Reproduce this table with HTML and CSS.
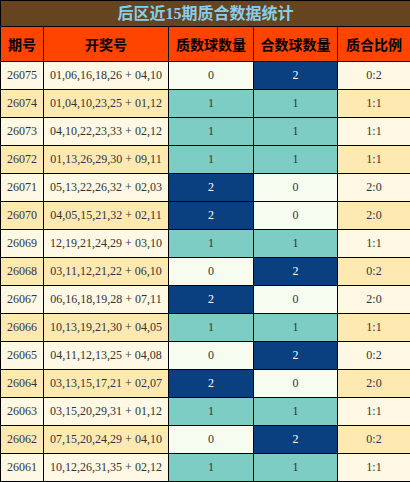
FILE: index.html
```html
<!DOCTYPE html>
<html lang="zh-CN">
<head>
    <meta charset="UTF-8">
    <title>后区近15期质合数据统计</title>
    <link rel="stylesheet" href="styles.css">
</head>
<body>
    <table class="stats">
        <colgroup>
            <col class="c-issue">
            <col class="c-nums">
            <col class="c-prime">
            <col class="c-comp">
            <col class="c-ratio">
        </colgroup>
        <thead>
            <tr class="title-row"><th colspan="5">后区近15期质合数据统计</th></tr>
            <tr class="head-row">
                <th>期号</th>
                <th>开奖号</th>
                <th>质数球数量</th>
                <th>合数球数量</th>
                <th>质合比例</th>
            </tr>
        </thead>
        <tbody>
            <tr><td>26075</td><td>01,06,16,18,26 + 04,10</td><td class="v0">0</td><td class="v2">2</td><td>0:2</td></tr>
            <tr><td>26074</td><td>01,04,10,23,25 + 01,12</td><td class="v1">1</td><td class="v1">1</td><td>1:1</td></tr>
            <tr><td>26073</td><td>04,10,22,23,33 + 02,12</td><td class="v1">1</td><td class="v1">1</td><td>1:1</td></tr>
            <tr><td>26072</td><td>01,13,26,29,30 + 09,11</td><td class="v1">1</td><td class="v1">1</td><td>1:1</td></tr>
            <tr><td>26071</td><td>05,13,22,26,32 + 02,03</td><td class="v2">2</td><td class="v0">0</td><td>2:0</td></tr>
            <tr><td>26070</td><td>04,05,15,21,32 + 02,11</td><td class="v2">2</td><td class="v0">0</td><td>2:0</td></tr>
            <tr><td>26069</td><td>12,19,21,24,29 + 03,10</td><td class="v1">1</td><td class="v1">1</td><td>1:1</td></tr>
            <tr><td>26068</td><td>03,11,12,21,22 + 06,10</td><td class="v0">0</td><td class="v2">2</td><td>0:2</td></tr>
            <tr><td>26067</td><td>06,16,18,19,28 + 07,11</td><td class="v2">2</td><td class="v0">0</td><td>2:0</td></tr>
            <tr><td>26066</td><td>10,13,19,21,30 + 04,05</td><td class="v1">1</td><td class="v1">1</td><td>1:1</td></tr>
            <tr><td>26065</td><td>04,11,12,13,25 + 04,08</td><td class="v0">0</td><td class="v2">2</td><td>0:2</td></tr>
            <tr><td>26064</td><td>03,13,15,17,21 + 02,07</td><td class="v2">2</td><td class="v0">0</td><td>2:0</td></tr>
            <tr><td>26063</td><td>03,15,20,29,31 + 01,12</td><td class="v1">1</td><td class="v1">1</td><td>1:1</td></tr>
            <tr><td>26062</td><td>07,15,20,24,29 + 04,10</td><td class="v0">0</td><td class="v2">2</td><td>0:2</td></tr>
            <tr><td>26061</td><td>10,12,26,31,35 + 02,12</td><td class="v1">1</td><td class="v1">1</td><td>1:1</td></tr>
        </tbody>
    </table>
</body>
</html>
```

FILE: styles.css
```css
body {
    margin: 0;
    background: #fff;
    font-family: "Liberation Serif", "Noto Sans CJK SC", serif;
}
.stats {
    width: 410px;
    border-collapse: collapse;
    table-layout: fixed;
    border: 1px solid #000;
}
.c-issue { width: 43px; }
.c-nums { width: 125px; }
.c-prime { width: 85px; }
.c-comp { width: 84px; }
.c-ratio { width: 73px; }
.stats th,
.stats td {
    border: 1px solid #000;
    padding: 0;
    text-align: center;
    white-space: nowrap;
    overflow: hidden;
}
.title-row th {
    height: 25px;
    background: #66441f;
    color: #87ceeb;
    font-size: 16px;
    font-weight: bold;
    line-height: 24px;
}
.head-row th {
    height: 34px;
    background: #ff4400;
    color: #000;
    font-family: "Noto Sans CJK SC", sans-serif;
    font-size: 14px;
    font-weight: bold;
}
.stats td {
    height: 27px;
    font-size: 12px;
    color: #333;
}
.stats tbody tr:nth-child(odd) td {
    background: #fff8e4;
}
.stats tbody tr:nth-child(even) td {
    background: #ffe9b3;
}
.stats tbody tr td.v0 {
    background: #f6fdf0;
}
.stats tbody tr td.v1 {
    background: #7ecdc5;
}
.stats tbody tr td.v2 {
    background: #0a3f80;
    color: #fff;
}
```
